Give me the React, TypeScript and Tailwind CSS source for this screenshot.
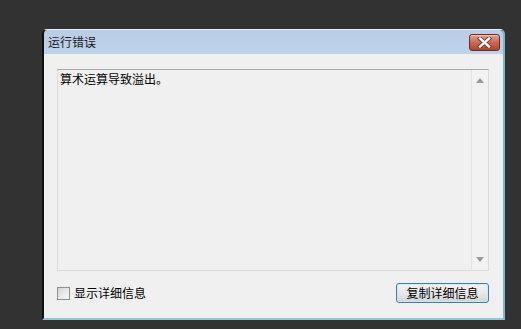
import React from 'react';

const cjk = { fontFamily: '"Noto Sans CJK SC", "Noto Sans", sans-serif' };

function CloseButton() {
  return (
    <button className="absolute right-[3px] top-[4px] flex h-[17px] w-[31px] items-center justify-center rounded-[3px] border border-[#6e2a1e] bg-gradient-to-b from-[#e3a08c] via-[#cc6850] to-[#b4442e] shadow-[inset_0_1px_0_rgba(255,255,255,0.45)]">
      <svg width="15" height="11" viewBox="0 0 15 11">
        <path d="M3 1.5 L12 9.5 M12 1.5 L3 9.5" stroke="#6b3a30" strokeWidth="4.2" strokeLinecap="square" />
        <path d="M3 1.5 L12 9.5 M12 1.5 L3 9.5" stroke="#ffffff" strokeWidth="2.4" strokeLinecap="square" />
      </svg>
    </button>
  );
}

function Scrollbar() {
  return (
    <div className="flex w-[17px] flex-col items-center justify-between border-l border-[#e3e3e3] bg-[#f2f2f2] py-[8px]">
      <svg width="8" height="5" viewBox="0 0 8 5">
        <path d="M0 5 L4 0 L8 5 Z" fill="#9a9a9a" />
      </svg>
      <svg width="8" height="5" viewBox="0 0 8 5">
        <path d="M0 0 L8 0 L4 5 Z" fill="#9a9a9a" />
      </svg>
    </div>
  );
}

export default function App() {
  return (
    <div className="h-[329px] w-[521px] overflow-hidden bg-[#323232] pl-[42px] pt-[29px]" style={cjk}>
      <div className="flex h-[291px] w-[463px] flex-col rounded-t-[5px] border-b-2 border-l-2 border-r-2 border-t border-b-[#8fc9d9] border-l-[#111111] border-r-[#78b9cc] border-t-[#e6eef7]">
        {/* title bar */}
        <div className="relative flex h-[24px] items-center rounded-t-[4px] bg-gradient-to-b from-[#b9cde5] to-[#bdd4ec] pl-[4px]">
          <span className="text-[12px] leading-none text-[#1b1b1b]">运行错误</span>
          <CloseButton />
        </div>

        {/* body */}
        <div className="flex flex-1 flex-col bg-[#f0f0f0] pb-[15px] pl-[13px] pr-[14px] pt-[15px]">
          <div className="flex flex-1 border border-[#dcdcdc] border-t-[#a8a8a8] bg-[#f0f0f0]">
            <div className="flex-1 pl-[2px] pt-[1px] text-[12px] leading-[15px] text-black">
              算术运算导致溢出。
            </div>
            <Scrollbar />
          </div>

          <div className="mt-[12px] flex h-[20px] items-center justify-between">
            <label className="flex items-center gap-[4px] text-[12px] text-black">
              <span className="h-[13px] w-[13px] border border-[#8e8f8f] bg-gradient-to-br from-[#d0d0d0] via-[#e8e8e8] to-[#f8f8f8]" />
              显示详细信息
            </label>
            <button className="flex h-[20px] w-[93px] items-center justify-center rounded-[3px] border border-[#3c7fb1] bg-gradient-to-b from-[#f4f4f4] via-[#e8e8e8] to-[#d4d4d4] text-[12px] leading-none text-black shadow-[inset_0_0_0_1px_rgba(200,235,250,0.8)]">
              复制详细信息
            </button>
          </div>
        </div>
      </div>
    </div>
  );
}
